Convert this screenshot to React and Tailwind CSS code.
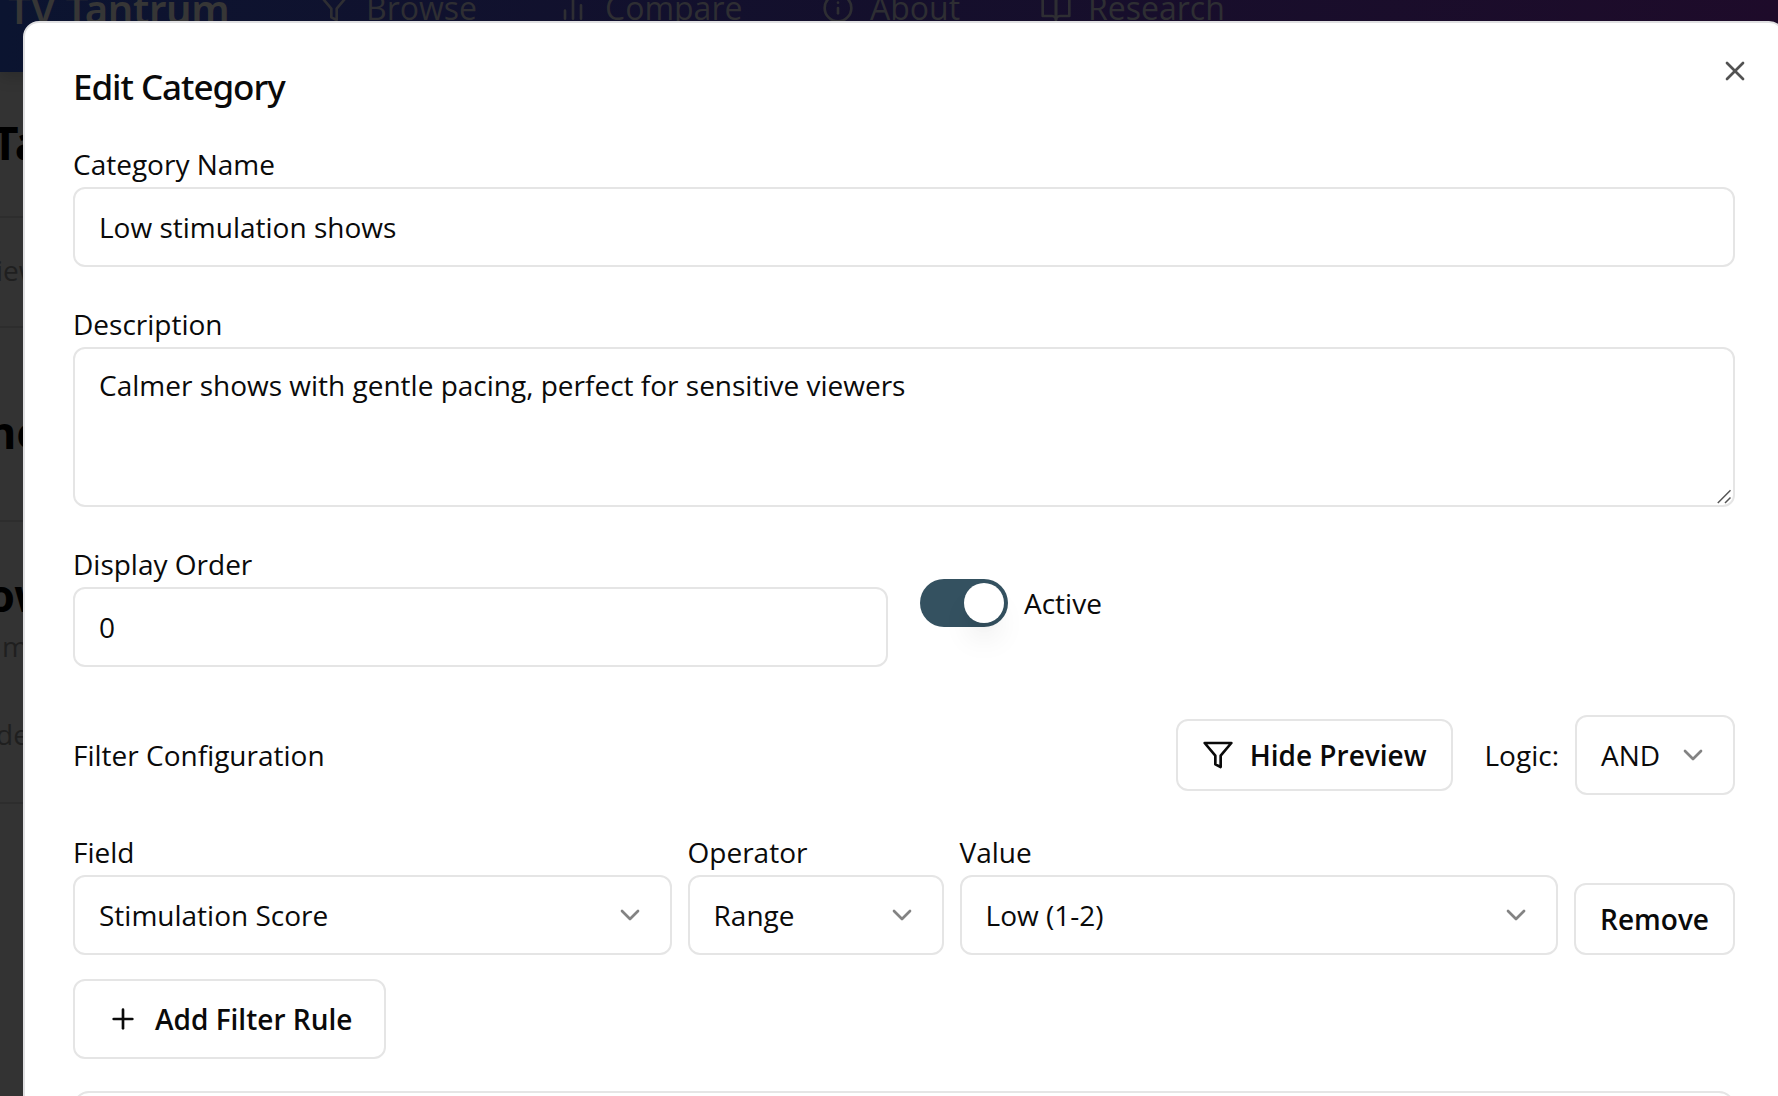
import React from "react";
import { X, Plus, ChevronDown, Info } from "lucide-react";

const FilterIcon = ({ className = "" }) => (
  <svg viewBox="0 0 24 24" className={`size-8 shrink-0 ${className}`} fill="none" stroke="currentColor" strokeWidth="2" strokeLinecap="round" strokeLinejoin="round">
    <polygon points="22 3 2 3 10 12.46 10 19 14 21 14 12.46 22 3" />
  </svg>
);

const BarsIcon = () => (
  <svg viewBox="0 0 24 24" className="size-8 shrink-0" fill="none" stroke="currentColor" strokeWidth="2" strokeLinecap="round">
    <path d="M18 20V10M12 20V4M6 20v-6" />
  </svg>
);

const BookIcon = () => (
  <svg viewBox="0 0 24 24" className="size-8 shrink-0" fill="none" stroke="currentColor" strokeWidth="2" strokeLinecap="round" strokeLinejoin="round">
    <path d="M2 3h6a4 4 0 0 1 4 4v14a3 3 0 0 0-3-3H2z" />
    <path d="M22 3h-6a4 4 0 0 0-4 4v14a3 3 0 0 1 3-3h7z" />
  </svg>
);

const navItems = [
  { label: "Browse", icon: <FilterIcon />, width: "w-[239px]" },
  { label: "Compare", icon: <BarsIcon />, width: "w-[265px]" },
  { label: "About", icon: <Info className="size-8 shrink-0" />, width: "w-[218px]" },
  { label: "Research", icon: <BookIcon />, width: "w-[240px]" },
];

function Backdrop() {
  return (
    <div className="flex h-full flex-col bg-[#333333]">
      <header className="-mt-14 flex h-32 shrink-0 items-center bg-linear-to-r from-[#0b1430] via-[#140f2c] to-[#1e0b2a] shadow-[0_6px_14px_rgba(0,0,0,0.15)]">
        <div className="w-[318px] shrink-0 whitespace-nowrap pl-[8px] pt-[2px] font-['Noto_Sans',sans-serif] text-[40px] font-semibold leading-none tracking-[-0.3px] text-[#363636]">
          TV Tantrum
        </div>
        <nav className="flex text-[32px] leading-[48px] text-[#2e2e33]">
          {navItems.map((n) => (
            <div key={n.label} className={`flex shrink-0 items-center gap-4 ${n.width}`}>
              {n.icon}
              {n.label}
            </div>
          ))}
        </nav>
      </header>
      <div className="flex w-[60px] flex-col overflow-hidden whitespace-nowrap text-[28px] text-[#1f1f1f]">
        <div className="h-[146px] border-b-2 border-[#2d2d2d] pt-[40px]">
          <div className="-ml-[8px] font-['Noto_Sans',sans-serif] text-[46px] font-bold leading-[60px] text-black">Ta</div>
        </div>
        <div className="h-[110px] border-b-2 border-[#2d2d2d] pt-[32px]">
          <div className="-ml-[4px] leading-10">iew</div>
        </div>
        <div className="h-[194px] border-b-2 border-[#2d2d2d] pt-[74px]">
          <div className="-ml-[13px] font-['Noto_Sans',sans-serif] text-[45px] font-bold leading-[60px] text-black">ne</div>
        </div>
        <div className="h-[282px] border-b-2 border-[#2d2d2d] pt-[43px]">
          <div className="-ml-[13px] font-['Noto_Sans',sans-serif] text-[45px] font-bold leading-[60px] text-black">ow</div>
          <div className="pl-[2px] pt-px leading-10">m</div>
          <div className="-ml-[4px] mt-[48px] leading-10">de</div>
        </div>
      </div>
    </div>
  );
}

function Field({ label, className = "", children }) {
  return (
    <div className={className}>
      <div className="h-12 text-[32px] leading-[48px]">
        <label className="text-[28px]">{label}</label>
      </div>
      {children}
    </div>
  );
}

const TextBox = ({ children }) => (
  <div className="flex h-20 w-full items-center rounded-xl border-2 border-[#e5e5e5] bg-white px-6">{children}</div>
);

const SelectBox = ({ children, className = "w-full" }) => (
  <button className={`flex h-20 items-center justify-between rounded-xl border-2 border-[#e5e5e5] bg-white px-6 ${className}`}>
    <span>{children}</span>
    <ChevronDown className="size-8 opacity-50" />
  </button>
);

export default function App() {
  return (
    <div className="relative h-[1096px] w-[1778px] overflow-hidden font-['Open_Sans',sans-serif] text-[28px] leading-10 text-[#0a0a0a]">
      <Backdrop />
      <div role="dialog" className="absolute left-[23px] top-[21px] h-[1400px] w-[1762px] rounded-2xl border-2 border-[#e0e0e2] bg-white p-12">
        <button className="absolute right-8 top-8 opacity-70">
          <X className="size-8" />
        </button>
        <div className="flex flex-col gap-8">
          <h2 className="-mt-[3px] h-[39px] font-['Noto_Sans',sans-serif] text-[35px] font-medium leading-[38px] tracking-[-1.05px]">
            Edit Category
          </h2>
          <Field label="Category Name">
            <TextBox>Low stimulation shows</TextBox>
          </Field>
          <Field label="Description">
            <div className="relative h-40 rounded-xl border-2 border-[#e5e5e5] bg-white px-6 py-4">
              Calmer shows with gentle pacing, perfect for sensitive viewers
              <svg className="absolute bottom-0 right-0 h-4 w-4" viewBox="0 0 16 16" stroke="#555" strokeWidth="1.5" fill="none">
                <path d="M0.8 14 13.5 1.3M8 14l5.5-5.5" />
              </svg>
            </div>
          </Field>
          <div className="grid grid-cols-2 items-center gap-8">
            <Field label="Display Order">
              <TextBox>0</TextBox>
            </Field>
            <div className="flex items-center gap-4">
              <button role="switch" aria-checked="true" className="flex h-12 w-[88px] items-center justify-end rounded-full bg-[#345160] p-1">
                <span className="size-10 rounded-full bg-white shadow-[0_20px_30px_-6px_rgba(0,0,0,0.1),0_8px_12px_-8px_rgba(0,0,0,0.1)]" />
              </button>
              <label className="leading-none">Active</label>
            </div>
          </div>
          <div className="mt-4 flex items-center justify-between">
            <label className="leading-none">Filter Configuration</label>
            <div className="flex items-center gap-8">
              <button className="flex h-[72px] items-center gap-4 rounded-xl border-2 border-[#e5e5e5] px-6 font-semibold">
                <FilterIcon />
                Hide Preview
              </button>
              <div className="flex items-center gap-4">
                <label className="leading-none">Logic:</label>
                <SelectBox className="w-40">AND</SelectBox>
              </div>
            </div>
          </div>
          <div className="flex flex-col gap-6">
            <div className="flex items-end gap-4">
              <Field label="Field" className="flex-1">
                <SelectBox>Stimulation Score</SelectBox>
              </Field>
              <Field label="Operator" className="w-64">
                <SelectBox>Range</SelectBox>
              </Field>
              <Field label="Value" className="flex-1">
                <SelectBox>Low (1-2)</SelectBox>
              </Field>
              <button className="h-[72px] rounded-xl border-2 border-[#e5e5e5] px-6 font-semibold">Remove</button>
            </div>
            <button className="flex h-20 items-center gap-4 self-start rounded-xl border-2 border-[#e5e5e5] px-8 font-semibold">
              <Plus className="size-8" />
              Add Filter Rule
            </button>
          </div>
          <div className="h-60 rounded-2xl border-2 border-[#e5e5e5]" />
        </div>
      </div>
    </div>
  );
}
